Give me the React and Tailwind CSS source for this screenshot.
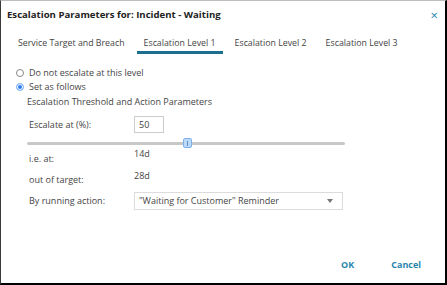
import React, { useState } from "react";

const tabs = ["Service Target and Breach", "Escalation Level 1", "Escalation Level 2", "Escalation Level 3"];

const App = () => {
    const [active, setActive] = useState(1);
    const [mode, setMode] = useState("set");
    const [pct, setPct] = useState("50");

    return (
        <div className="w-[447px] h-[285px] bg-white border-l border-t border-l-[#3a3a3a] border-t-[#bdbdbd] border-r-2 border-b-2 border-r-black border-b-black flex flex-col text-[#333] font-['Open_Sans',sans-serif] overflow-hidden">
            {/* header */}
            <div className="flex items-center justify-between pl-[6px] pr-[7px] pt-[4px] h-[24px]">
                <h1 className="font-bold text-[9.6px] text-[#222]">Escalation Parameters for: Incident - Waiting</h1>
                <button className="text-[#2a86ad] text-[13px] leading-none">×</button>
            </div>

            {/* tabs */}
            <div className="flex pl-[10px] mt-[12px] gap-[5px]">
                {tabs.map((t, i) => (
                    <button
                        key={t}
                        onClick={() => setActive(i)}
                        className={`px-[7px] pb-[2px] text-[8.8px] leading-[12px] text-[#444] border-b-[3px] ${
                            active === i ? "border-[#1c6f8f]" : "border-transparent"
                        }`}
                    >
                        {t}
                    </button>
                ))}
            </div>

            {/* body */}
            <div className="flex flex-col pl-[15px] pt-[12px] text-[9px] leading-[12px] text-[#444]">
                <label className="flex items-center gap-[5px] h-[14px]">
                    <span className={`w-[8px] h-[8px] rounded-full border ${mode === "none" ? "border-[#2b7de9] bg-[#2b7de9]" : "border-[#888]"}`} onClick={() => setMode("none")} />
                    Do not escalate at this level
                </label>
                <label className="flex items-center gap-[5px] h-[14px]">
                    <span className={`w-[8px] h-[8px] rounded-full border ${mode === "set" ? "border-[#8dbcf3] bg-[#2b7de9] shadow-[inset_0_0_0_1px_white]" : "border-[#888]"}`} onClick={() => setMode("set")} />
                    Set as follows
                </label>
                <div className="pl-[11px] mt-[1px] h-[14px] flex items-center">Escalation Threshold and Action Parameters</div>

                <div className="pl-[13px] flex flex-col">
                    <div className="flex items-center mt-[7px]">
                        <span className="w-[105px]">Escalate at (%):</span>
                        <input
                            value={pct}
                            onChange={(e) => setPct(e.target.value)}
                            className="w-[30px] h-[17px] border border-[#ccc] px-[4px] text-[9px] text-[#444] outline-none"
                        />
                    </div>

                    {/* slider */}
                    <div className="relative w-[318px] h-[10px] mt-[5px] -ml-[2px] flex items-center">
                        <div className="w-full h-[3px] rounded-full bg-[#c8c8c8]" />
                        <div className="absolute left-[156px] top-0 w-[9px] h-[10px] rounded-[2px] bg-[#bcd9f7] border border-[#7fb2ea] flex items-center justify-center">
                            <div className="w-[1px] h-[5px] bg-[#5b8fd0]" />
                        </div>
                    </div>

                    <div className="flex h-[16px]">
                        <span className="w-[105px] pt-[5px]">i.e. at:</span>
                        <span>14d</span>
                    </div>
                    <div className="flex mt-[6px] h-[16px]">
                        <span className="w-[105px] pt-[4px]">out of target:</span>
                        <span>28d</span>
                    </div>
                    <div className="flex items-center mt-[6px]">
                        <span className="w-[105px]">By running action:</span>
                        <div className="w-[209px] h-[18px] border border-[#dcdcdc] flex items-center justify-between pl-[4px] pr-[9px]">
                            <span>"Waiting for Customer" Reminder</span>
                            <svg width="6" height="4" viewBox="0 0 6 4"><path d="M0 0h6L3 4z" fill="#777" /></svg>
                        </div>
                    </div>
                </div>
            </div>

            {/* footer */}
            <div className="mt-auto flex justify-end gap-[37px] pr-[24px] pb-[12px]">
                <button className="text-[9px] leading-[12px] font-bold text-[#2a86ad]">OK</button>
                <button className="text-[9px] leading-[12px] font-bold text-[#2a86ad]">Cancel</button>
            </div>
        </div>
    );
};

export default App;
